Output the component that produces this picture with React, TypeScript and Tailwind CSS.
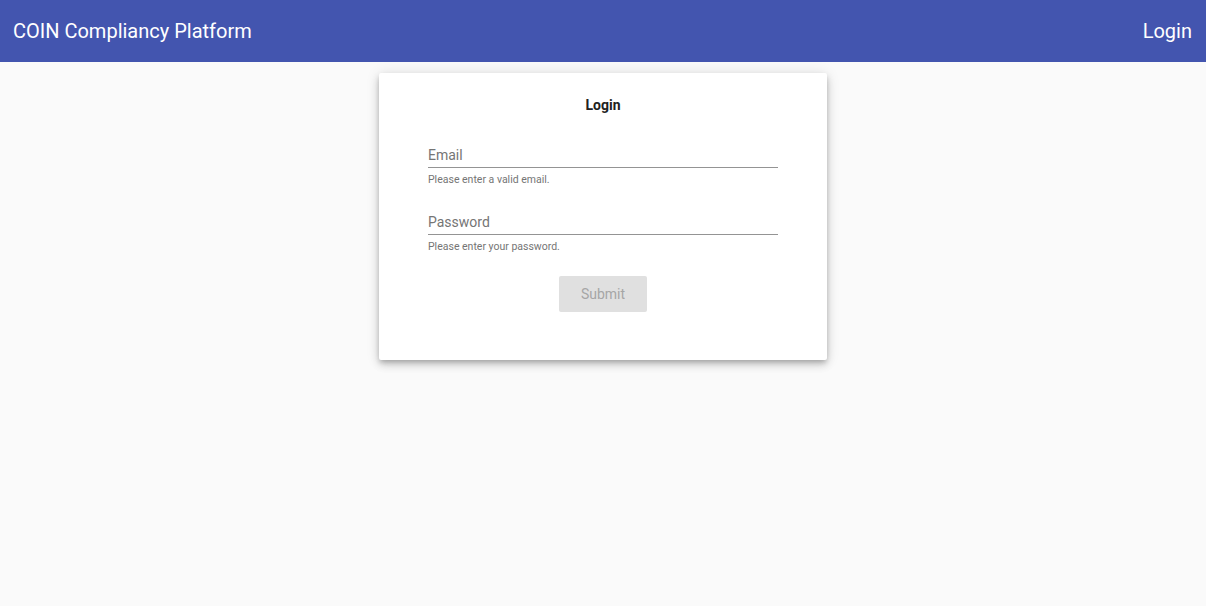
export default function App() {
    return (
        <div className="min-h-screen bg-[#fafafa] font-['Roboto',sans-serif]">
            {/* Toolbar */}
            <header className="h-[62px] bg-[#4355af] text-white flex items-center justify-between px-[13px] pr-[14px]">
                <span className="text-[20px] leading-6">COIN Compliancy Platform</span>
                <span className="text-[20px] leading-6">Login</span>
            </header>

            <div className="w-[448px] mx-auto mt-[11px] bg-white rounded-[2px] shadow-[0_3px_5px_-1px_rgba(0,0,0,0.2),0_5px_8px_0_rgba(0,0,0,0.14),0_1px_14px_0_rgba(0,0,0,0.12)] px-[49px] pt-[22px] pb-[48px]">
                <h2 className="text-sm leading-5 font-bold text-center text-[#212121]">Login</h2>

                <div className="mt-[27px]">
                    <input
                        type="email"
                        placeholder="Email"
                        className="w-full h-[26px] text-sm leading-5 text-[#212121] placeholder:text-[#757575] border-b border-[#949494] outline-none bg-transparent"
                    />
                    <p className="mt-[5px] text-[10.5px] leading-[14px] text-[#757575]">Please enter a valid email.</p>
                </div>

                <div className="mt-[22px]">
                    <input
                        type="password"
                        placeholder="Password"
                        className="w-full h-[26px] text-sm leading-5 text-[#212121] placeholder:text-[#757575] border-b border-[#949494] outline-none bg-transparent"
                    />
                    <p className="mt-[5px] text-[10.5px] leading-[14px] text-[#757575]">Please enter your password.</p>
                </div>

                <div className="flex justify-center mt-[22px]">
                    <button disabled className="w-[88px] h-9 rounded-[2px] bg-[#e0e0e0] text-sm text-[#a6a6a6]">
                        Submit
                    </button>
                </div>
            </div>
        </div>
    )
}
